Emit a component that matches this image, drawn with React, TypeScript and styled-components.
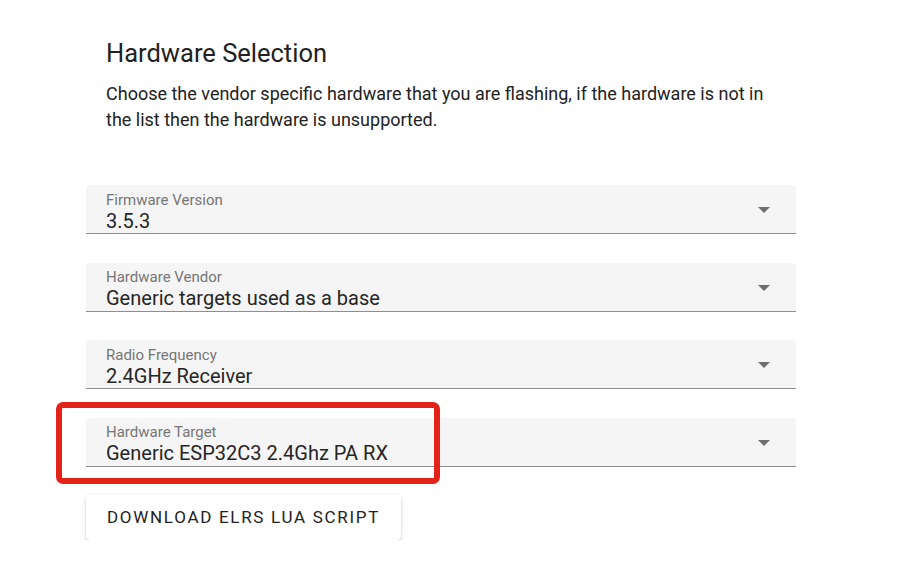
import styled, { createGlobalStyle } from 'styled-components'

const GlobalStyle = createGlobalStyle`
    body {
        margin: 0;
        background: #ffffff;
        font-family: Roboto, "Liberation Sans", sans-serif;
        color: rgba(0, 0, 0, 0.87);
    }
`;

const Page = styled.div`
    padding: 37px 0 0 86px;
    width: 710px;
`;

const Title = styled.h2`
    margin: 0 0 0 20px;
    font-size: 25.5px;
    font-weight: 400;
    line-height: 32px;
    color: #222;
`;

const Intro = styled.p`
    margin: 12px 0 0 20px;
    max-width: 680px;
    font-size: 18px;
    line-height: 26px;
    color: #222;
`;

const Fields = styled.div`
    display: flex;
    flex-direction: column;
    gap: 28.5px;
    margin-top: 52px;
`;

const Field = styled.div`
    position: relative;
    display: flex;
    align-items: center;
    height: 48px;
    background: #f5f5f5;
    border-bottom: 1px solid #8e8e8e;
    border-radius: 4px 4px 0 0;
    padding: 0 26px 0 20px;
`;

const FieldText = styled.div`
    flex: 1;
    display: flex;
    flex-direction: column;
    padding-top: 6px;
`;

const Label = styled.span`
    font-size: 15px;
    line-height: 17px;
    color: #767676;
`;

const Value = styled.span`
    font-size: 20px;
    line-height: 24px;
    color: #262626;
`;

const Arrow = styled.span`
    width: 0;
    height: 0;
    border-left: 6px solid transparent;
    border-right: 6px solid transparent;
    border-top: 6px solid #6e6e6e;
    margin-top: 2px;
`;

const Highlight = styled.div`
    position: absolute;
    left: -30px;
    top: -16px;
    width: 384px;
    height: 82px;
    box-sizing: border-box;
    border: 6px solid #e2231a;
    border-radius: 7px;
    pointer-events: none;
`;

const Button = styled.button`
    margin-top: 28px;
    height: 45px;
    padding: 0 21px;
    border: none;
    border-radius: 4px;
    background: #ffffff;
    box-shadow: 0 3px 1px -2px rgba(0,0,0,0.2), 0 2px 2px 0 rgba(0,0,0,0.14), 0 1px 5px 0 rgba(0,0,0,0.12);
    font-family: Roboto, "Liberation Sans", sans-serif;
    font-size: 17px;
    font-weight: 400;
    letter-spacing: 1.7px;
    color: #222;
    text-transform: uppercase;
    cursor: pointer;
`;

const fields = [
    { label: 'Firmware Version', value: '3.5.3' },
    { label: 'Hardware Vendor', value: 'Generic targets used as a base' },
    { label: 'Radio Frequency', value: '2.4GHz Receiver' },
    { label: 'Hardware Target', value: 'Generic ESP32C3 2.4Ghz PA RX', marked: true },
];

export default function App() {
    return (
        <>
            <GlobalStyle />
            <Page>
                <Title>Hardware Selection</Title>
                <Intro>
                    Choose the vendor specific hardware that you are flashing, if the hardware is not in the list then the hardware is unsupported.
                </Intro>
                <Fields>
                    {fields.map((f) => (
                        <Field key={f.label}>
                            <FieldText>
                                <Label>{f.label}</Label>
                                <Value>{f.value}</Value>
                            </FieldText>
                            <Arrow />
                            {f.marked && <Highlight />}
                        </Field>
                    ))}
                </Fields>
                <Button>Download ELRS LUA script</Button>
            </Page>
        </>
    );
}
